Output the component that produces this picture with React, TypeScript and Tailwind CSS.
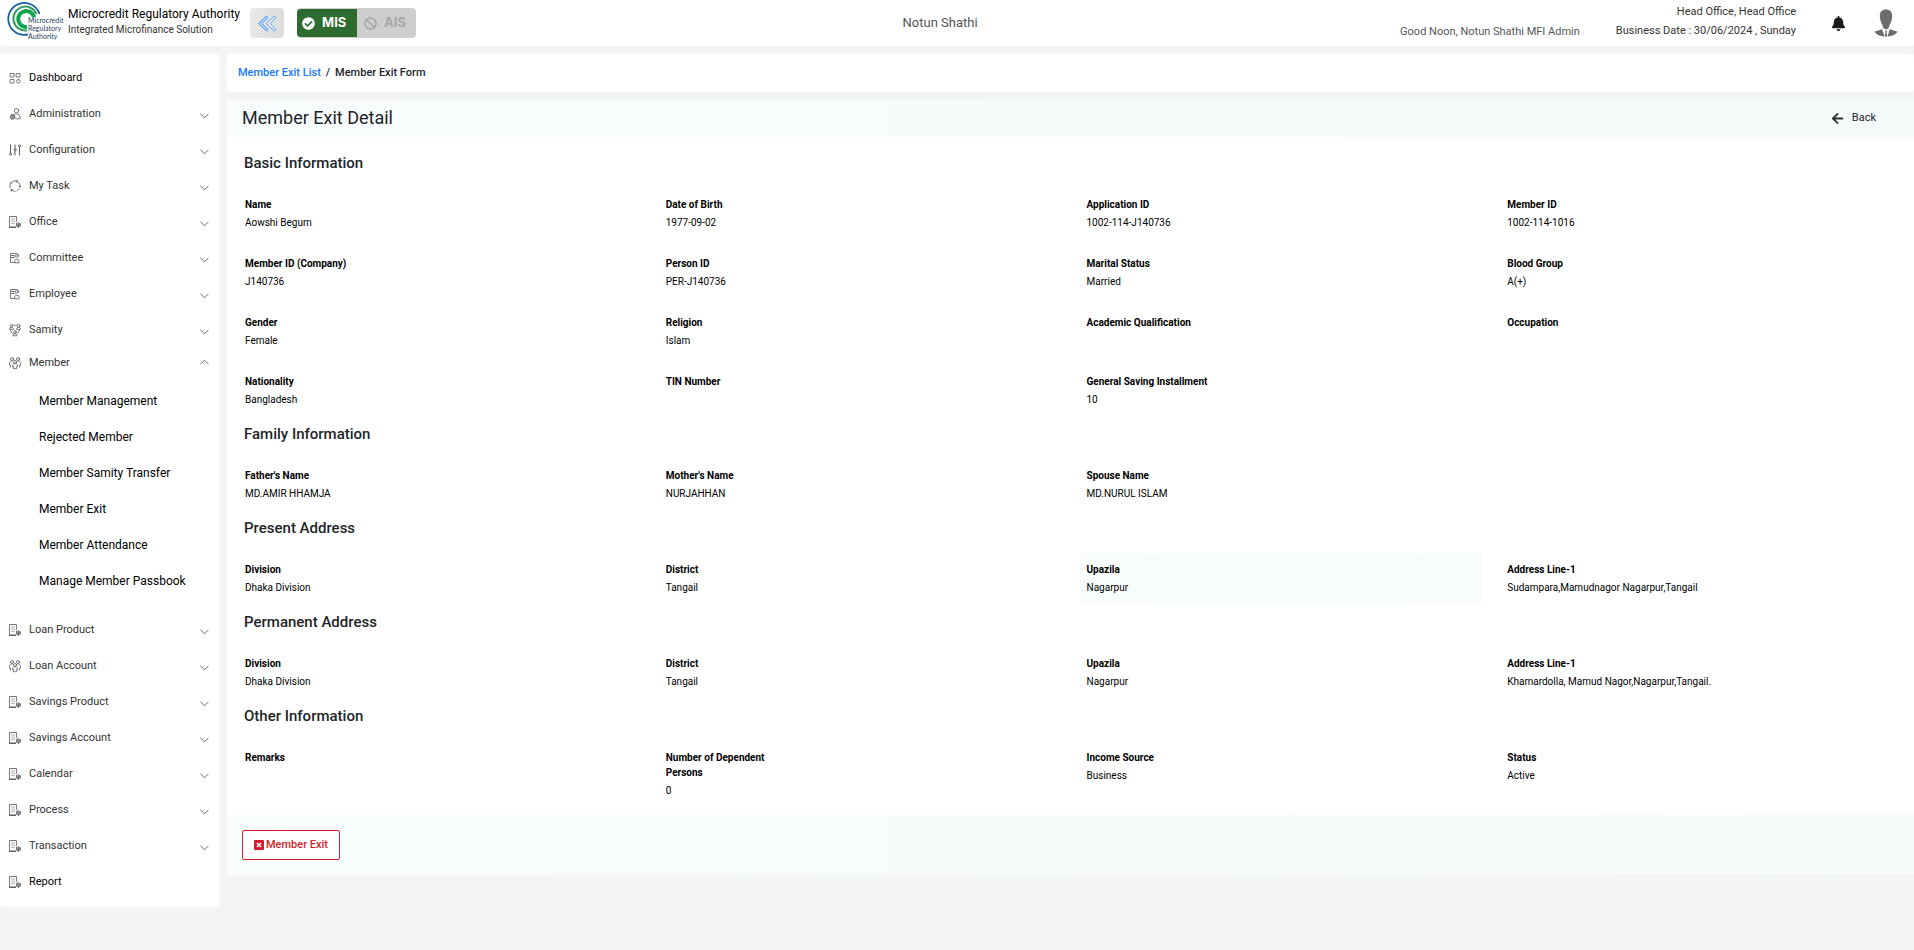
import React from 'react';
import { FaArrowLeft, FaBell, FaCheckCircle, FaBan } from 'react-icons/fa';

// ============================================
// Types
// ============================================

type IconName = 'grid' | 'admin' | 'sliders' | 'refresh' | 'doc' | 'badge' | 'samity' | 'people';

interface NavItem {
  label: string;
  icon: IconName;
  plain?: boolean;
  children?: string[];
}

interface Field {
  label: string;
  value?: string;
  active?: boolean;
}

interface Section {
  title: string;
  fields: Field[];
}

// ============================================
// Data
// ============================================

const NAV: NavItem[] = [
  { label: 'Dashboard', icon: 'grid', plain: true },
  { label: 'Administration', icon: 'admin' },
  { label: 'Configuration', icon: 'sliders' },
  { label: 'My Task', icon: 'refresh' },
  { label: 'Office', icon: 'doc' },
  { label: 'Committee', icon: 'badge' },
  { label: 'Employee', icon: 'badge' },
  { label: 'Samity', icon: 'samity' },
  {
    label: 'Member',
    icon: 'people',
    children: [
      'Member Management',
      'Rejected Member',
      'Member Samity Transfer',
      'Member Exit',
      'Member Attendance',
      'Manage Member Passbook',
    ],
  },
  { label: 'Loan Product', icon: 'doc' },
  { label: 'Loan Account', icon: 'people' },
  { label: 'Savings Product', icon: 'doc' },
  { label: 'Savings Account', icon: 'doc' },
  { label: 'Calendar', icon: 'doc' },
  { label: 'Process', icon: 'doc' },
  { label: 'Transaction', icon: 'doc' },
  { label: 'Report', icon: 'doc', plain: true },
];

const SECTIONS: Section[] = [
  {
    title: 'Basic Information',
    fields: [
      { label: 'Name', value: 'Aowshi Begum' },
      { label: 'Date of Birth', value: '1977-09-02' },
      { label: 'Application ID', value: '1002-114-J140736' },
      { label: 'Member ID', value: '1002-114-1016' },
      { label: 'Member ID (Company)', value: 'J140736' },
      { label: 'Person ID', value: 'PER-J140736' },
      { label: 'Marital Status', value: 'Married' },
      { label: 'Blood Group', value: 'A(+)' },
      { label: 'Gender', value: 'Female' },
      { label: 'Religion', value: 'Islam' },
      { label: 'Academic Qualification' },
      { label: 'Occupation' },
      { label: 'Nationality', value: 'Bangladesh' },
      { label: 'TIN Number' },
      { label: 'General Saving Installment', value: '10' },
    ],
  },
  {
    title: 'Family Information',
    fields: [
      { label: "Father's Name", value: 'MD.AMIR HHAMJA' },
      { label: "Mother's Name", value: 'NURJAHHAN' },
      { label: 'Spouse Name', value: 'MD.NURUL ISLAM' },
    ],
  },
  {
    title: 'Present Address',
    fields: [
      { label: 'Division', value: 'Dhaka Division' },
      { label: 'District', value: 'Tangail' },
      { label: 'Upazila', value: 'Nagarpur', active: true },
      { label: 'Address Line-1', value: 'Sudampara,Mamudnagor Nagarpur,Tangail' },
    ],
  },
  {
    title: 'Permanent Address',
    fields: [
      { label: 'Division', value: 'Dhaka Division' },
      { label: 'District', value: 'Tangail' },
      { label: 'Upazila', value: 'Nagarpur' },
      { label: 'Address Line-1', value: 'Khamardolla, Mamud Nagor,Nagarpur,Tangail.' },
    ],
  },
  {
    title: 'Other Information',
    fields: [
      { label: 'Remarks' },
      { label: 'Number of Dependent Persons', value: '0' },
      { label: 'Income Source', value: 'Business' },
      { label: 'Status', value: 'Active' },
    ],
  },
];

// ============================================
// Icons
// ============================================

const NavIcon: React.FC<{ name: IconName }> = ({ name }) => (
  <svg
    viewBox="0 0 12 12"
    className="w-3 h-3 shrink-0 overflow-visible"
    fill="none"
    stroke="#5a5a5a"
    strokeWidth="0.8"
    strokeLinecap="round"
    strokeLinejoin="round"
    aria-hidden="true"
  >
    {name === 'grid' && (
      <path d="M1.500 1.500h3.500v3.500h-3.500zM7.500 1.500h3.500v3.500h-3.500zM1.500 7.500h3.500v3.500h-3.500zM9.300 7.500a1.800 1.800 0 1 0 0 3.600a1.800 1.800 0 1 0 0-3.600z" />
    )}
    {name === 'admin' && (
      <>
        <circle cx="7.500" cy="2.700" r="2.200" />
        <path d="M5 7c.8-.9 1.600-1.200 2.500-1.200c2.200 0 3.700 1.700 3.700 5H7" />
        <circle cx="3.600" cy="9" r="2.300" fill="#9a9a9a" />
        <path d="M2.200 7.200c.3-1.300 2.500-1.300 2.800 0" />
      </>
    )}
    {name === 'sliders' && (
      <>
        <path d="M1.500 1v8M6 1v3.500M6 7v4M10.500 3v8" strokeWidth="1" />
        <circle cx="1.500" cy="10.200" r="1" />
        <circle cx="6" cy="5.800" r="1.100" />
        <circle cx="10.500" cy="1.800" r="1.100" />
      </>
    )}
    {name === 'refresh' && (
      <>
        <path d="M3.500 1.300A5.200 5.200 0 0 1 8 1M9.500 2.100A5.200 5.200 0 0 1 11 6.800M10.400 8.700A5.200 5.200 0 0 1 8 10.900M6 11.400A5.200 5.200 0 0 1 2 9.500M1.100 7.600A5.200 5.200 0 0 1 2.300 2.400" />
        <path d="M8.200.2v1.800H6.800M11.700 6l-.8 1.200-1.100-.9M2.200 11.200V9.400h1.500M1.100 3l1.300-.8.900 1.100" />
      </>
    )}
    {name === 'doc' && (
      <>
        <path d="M7.500 5.500V.5H.5v11h6" />
        <path d="M2.400 3h3.400M2.400 5.200h3.400M2.400 7.400h3" stroke="#9a9a9a" />
        <path d="M.5 11.200h6" strokeWidth="1.300" />
        <path d="M9.400 6.800l2 1v2.300l-2 1.100-2-1.100V7.800zM7.400 7.800l2 1 2-1M9.400 8.800v2.400" fill="#b5b5b5" />
      </>
    )}
    {name === 'badge' && (
      <>
        <path d="M5.500 10.500H1.500V1.500h5" />
        <path d="M2.800 3.500h2M2.800 5.500h2" strokeWidth="1.100" />
        <circle cx="7.300" cy="4" r="1.400" />
        <path d="M5.800 10.500V8.300c.4-1.400 3.700-1.400 4.200 0v2.200zM7.500 1.500c1.800 0 2.500 1 2.300 2.700" />
      </>
    )}
    {name === 'samity' && (
      <>
        <circle cx="2.400" cy="1.800" r="1.400" />
        <circle cx="9.600" cy="1.800" r="1.400" />
        <path d="M.4 5c0-2.300 4-2.300 4 0zM7.600 5c0-2.300 4-2.300 4 0zM4.800 1.200h2.400M1.600 6c.2 2 1 3 2.400 3.700M10.400 6c-.2 2-1 3-2.400 3.700" />
        <circle cx="6" cy="8" r="1.300" />
        <path d="M4 11.400c0-2.200 4-2.200 4 0z" />
      </>
    )}
    {name === 'people' && (
      <>
        <circle cx="3" cy="2" r="1.500" />
        <circle cx="9" cy="2" r="1.500" />
        <circle cx="6" cy="5" r="1.500" />
        <path d="M1.500 10.200V8.500H.6V5.800C.6 4.300 2 3.800 3.300 4M10.500 10.200V8.500h.9V5.800c0-1.500-1.400-2-2.700-1.800M3.600 9.500V8.200c0-2.200 4.800-2.200 4.800 0v1.300H7.600v2.200H4.400V9.500z" />
      </>
    )}
  </svg>
);

const Chevron: React.FC<{ up?: boolean }> = ({ up }) => (
  <svg viewBox="0 0 10 6" className="w-[9px] h-[6px]" fill="none" stroke="#555" strokeWidth="1" aria-hidden="true">
    <path d={up ? 'M.5 5.500L5 1l4.500 4.500' : 'M.5.500L5 5L9.500.500'} />
  </svg>
);

const Logo: React.FC = () => (
  <svg viewBox="0 0 56 42" className="w-14 h-[42px] shrink-0 overflow-visible" aria-label="Microcredit Regulatory Authority">
    <g fill="none">
      <path d="M31.500 12A16 16 0 1 0 20 32.500" stroke="#1a5fa0" strokeWidth="1.800" />
      <path d="M28.500 12A12 12 0 1 0 19 28.500" stroke="#3b9a62" strokeWidth="2" />
      <path d="M26 15A8 8 0 1 0 19 25" stroke="#0aa54c" strokeWidth="4" />
    </g>
    <g fontFamily="Lato, sans-serif" fontSize="7" fill="#24405f">
      <text x="20" y="21">Microcredit</text>
      <text x="20" y="29">Regulatory</text>
      <text x="20" y="37">Authority</text>
    </g>
  </svg>
);

const Avatar: React.FC = () => (
  <svg viewBox="0 0 24 28" className="w-6 h-7" fill="#6b6c6e" aria-hidden="true">
    <path d="M12 0.500c4 0 6.300 2.700 6.200 6.500c0 3-1.200 6.500-2.700 9.300c-.4 2.500-1.500 4-3.500 4s-3.100-1.500-3.500-4C7 13.500 5.800 10 5.800 7C5.700 3.200 8 .500 12 .500z" />
    <path d="M8 20l2.600 7.400C6 27.400 2.500 26 .5 22.800C3 21.500 6 21.300 8 20zM16 20l-2.600 7.400c4.600 0 8.100-1.400 10.100-4.600C21 21.500 18 21.300 16 20zM11 21.500h2l-.4 1.600.5 4.300h-2.200l.5-4.300z" />
  </svg>
);

// ============================================
// Header
// ============================================

const TopBar: React.FC = () => (
  <header className="h-[46px] bg-white rounded-b flex items-center justify-between pl-2 pr-4">
    <div className="flex items-center">
      <Logo />
      <div className="ml-1 pb-[2px]">
        <div className="text-[12px] leading-4 text-black">Microcredit Regulatory Authority</div>
        <div className="text-[10px] leading-4 text-[#333]">Integrated Microfinance Solution</div>
      </div>
      <button
        type="button"
        aria-label="Collapse menu"
        className="ml-[10px] w-[34px] h-[30px] rounded bg-linear-to-r from-[#e9e9e9] to-[#dcdcdc] flex items-center justify-center"
      >
        <svg viewBox="0 0 20 17" className="w-5 h-[17px]" fill="#fff" stroke="#4a90f0" strokeWidth="1" strokeLinejoin="round">
          <path d="M9.500 1l1.500 1.500-6 6 6 6L9.500 16 1.500 8.500z" fill="#b9d6fb" />
          <path d="M17.500 1L19 2.500l-6 6 6 6-1.500 1.500-8-7.500z" />
        </svg>
      </button>
      <div className="ml-[13px] h-[30px] rounded bg-[#cecece] flex items-center font-[Inter,sans-serif] text-[13px] font-bold">
        <button type="button" className="w-[60px] h-7 rounded-l bg-[#2e6b30] text-white flex items-center gap-[7px] pl-[5px]">
          <FaCheckCircle size={13} />
          MIS
        </button>
        <button type="button" className="w-[59px] h-7 text-[#a8a8a8] flex items-center gap-[7px] pl-[7px]">
          <FaBan size={13} />
          AIS
        </button>
      </div>
    </div>
    <div className="ml-16 text-[13px] text-[#555]">Notun Shathi</div>
    <div className="flex items-center text-[11px] text-[#333]">
      <div className="self-end pb-[3px] leading-[19px] text-[#555]">Good Noon, Notun Shathi MFI Admin</div>
      <div className="ml-9 pb-1 text-right leading-[19px]">
        <div>Head Office, Head Office</div>
        <div>Business Date : 30/06/2024 , Sunday</div>
      </div>
      <button type="button" aria-label="Notifications" className="ml-[35px] text-[#1c1c1c]">
        <FaBell size={15} />
      </button>
      <button type="button" aria-label="Profile" className="ml-7">
        <Avatar />
      </button>
    </div>
  </header>
);

// ============================================
// Sidebar
// ============================================

const Sidebar: React.FC = () => (
  <nav className="w-[219px] shrink-0 bg-white rounded pt-[6px] pb-[7px]">
    <ul>
      {NAV.map((item) => (
        <li key={item.label}>
          <button
            type="button"
            className={`w-full flex items-center pl-[9px] pr-[10px] text-[11px] ${
              item.children ? 'h-[30px]' : 'h-9'
            } ${item.plain ? 'text-black' : 'text-[#333]'}`}
          >
            <NavIcon name={item.icon} />
            <span className="ml-2">{item.label}</span>
            {!item.plain && (
              <span className={`ml-auto ${item.children ? 'pb-[2px]' : 'pt-1'}`}>
                <Chevron up={!!item.children} />
              </span>
            )}
          </button>
          {item.children && (
            <ul className="pt-[5px] pb-[13px]">
              {item.children.map((child) => (
                <li key={child}>
                  <a href="#" className="h-9 flex items-center pl-[39px] text-[12px] text-black">
                    {child}
                  </a>
                </li>
              ))}
            </ul>
          )}
        </li>
      ))}
    </ul>
  </nav>
);

// ============================================
// Detail
// ============================================

const DetailSection: React.FC<{ section: Section }> = ({ section }) => (
  <section>
    <h2 className="pl-[6px] mb-[13px] text-[15px] leading-6 font-medium text-[#212529]">{section.title}</h2>
    <dl className="grid grid-cols-4 gap-x-[18px] gap-y-2">
      {section.fields.map((field) => (
        <div
          key={field.label}
          className={`min-h-[51px] py-[9px] px-[7px] text-[10px] leading-[15px] text-black ${
            field.active ? 'bg-linear-to-r from-[#f8fcfc] via-[#f7fefa] to-[#f8fcfc]' : ''
          }`}
        >
          <dt className="w-[134px] font-bold">{field.label}</dt>
          <dd className="mt-[3px]">{field.value}</dd>
        </div>
      ))}
    </dl>
  </section>
);

const App: React.FC = () => (
  <div className="min-h-screen bg-[#f4f4f4] font-[Roboto,sans-serif]">
    <TopBar />
    <div className="mt-2 flex items-start gap-2">
      <Sidebar />
      <main className="flex-1 min-w-0">
        <nav className="h-[38px] bg-white rounded flex items-center gap-[5px] pl-[11px] text-[11px] font-medium text-[#212529]">
          <a href="#" className="text-[#1677ff]">
            Member Exit List
          </a>
          <span>/</span>
          <span>Member Exit Form</span>
        </nav>

        <div className="mt-2 bg-white">
          <div className="h-[37px] bg-linear-to-r from-[#f8fcfd] to-[#f5fafa] flex items-center justify-between pl-[15px] pr-[38px]">
            <h1 className="pb-[2px] text-[18px] leading-6 text-[#212529]">Member Exit Detail</h1>
            <button type="button" className="flex items-center gap-2 text-[11px] text-[#212529]">
              <FaArrowLeft size={13} className="text-[#333]" />
              Back
            </button>
          </div>

          <div className="flex flex-col gap-[6px] px-[11px] pt-[14px] pb-2">
            {SECTIONS.map((section) => (
              <DetailSection key={section.title} section={section} />
            ))}
          </div>

          <div className="h-[60px] bg-linear-to-r from-[#f8fcfd] to-[#f5fafa] flex items-center pl-[15px]">
            <button
              type="button"
              className="h-[30px] px-[11px] flex items-center gap-[2px] border border-[#dc1c2e] rounded-xs bg-white text-[11px] font-medium text-[#d81b2c]"
            >
              <svg viewBox="0 0 10 10" className="w-[10px] h-[10px]" aria-hidden="true">
                <rect width="10" height="10" rx="1" fill="#d81b2c" />
                <path d="M3 3l4 4M7 3L3 7" stroke="#fff" strokeWidth="1.600" />
              </svg>
              Member Exit
            </button>
          </div>
        </div>
      </main>
    </div>
  </div>
);

export default App;
